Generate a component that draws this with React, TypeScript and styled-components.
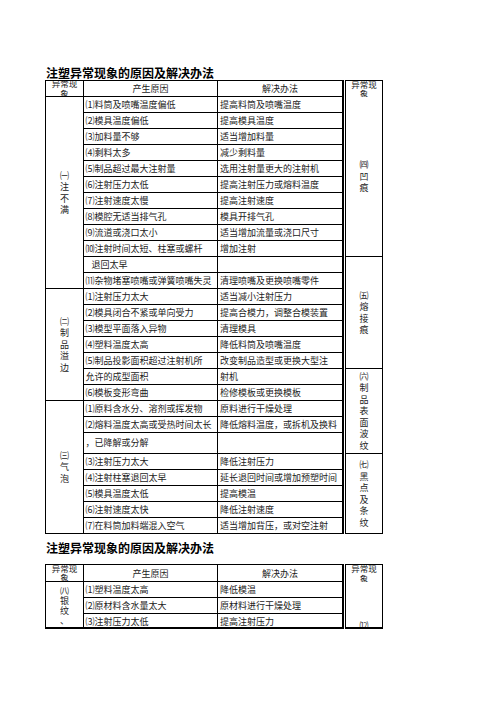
import React from 'react';
import styled, { createGlobalStyle } from 'styled-components';

const GlobalStyle = createGlobalStyle`
  html, body {
    margin: 0;
    padding: 0;
    background: #ffffff;
  }
  body {
    font-family: "Noto Sans CJK SC", "Noto Sans", sans-serif;
    color: #1a1a1a;
  }
`;

type Row = { cause: string; fix: string; indent?: boolean; tall?: boolean };
type Group = { label: string[]; rows: Row[] };
type SideGroup = { label: string[]; height: number };

const mainGroups: Group[] = [
  {
    label: ['㈠', '注', '不', '满'],
    rows: [
      { cause: '⑴料筒及喷嘴温度偏低', fix: '提高料筒及喷嘴温度' },
      { cause: '⑵模具温度偏低', fix: '提高模具温度' },
      { cause: '⑶加料量不够', fix: '适当增加料量' },
      { cause: '⑷剩料太多', fix: '减少剩料量' },
      { cause: '⑸制品超过最大注射量', fix: '选用注射量更大的注射机' },
      { cause: '⑹注射压力太低', fix: '提高注射压力或熔料温度' },
      { cause: '⑺注射速度太慢', fix: '提高注射速度' },
      { cause: '⑻模腔无适当排气孔', fix: '模具开排气孔' },
      { cause: '⑼流道或浇口太小', fix: '适当增加流量或浇口尺寸' },
      { cause: '⑽注射时间太短、柱塞或螺杆', fix: '增加注射' },
      { cause: '退回太早', fix: '', indent: true },
      { cause: '⑾杂物堵塞喷嘴或弹簧喷嘴失灵', fix: '清理喷嘴及更换喷嘴零件' },
    ],
  },
  {
    label: ['㈡', '制', '品', '溢', '边'],
    rows: [
      { cause: '⑴注射压力太大', fix: '适当减小注射压力' },
      { cause: '⑵模具闭合不紧或单向受力', fix: '提高合模力，调整合模装置' },
      { cause: '⑶模型平面落入异物', fix: '清理模具' },
      { cause: '⑷塑料温度太高', fix: '降低料筒及喷嘴温度' },
      { cause: '⑸制品投影面积超过注射机所', fix: '改变制品造型或更换大型注' },
      { cause: '允许的成型面积', fix: '射机' },
      { cause: '⑹模板变形弯曲', fix: '检修模板或更换模板' },
    ],
  },
  {
    label: ['㈢', '气', '泡'],
    rows: [
      { cause: '⑴原料含水分、溶剂或挥发物', fix: '原料进行干燥处理' },
      { cause: '⑵熔料温度太高或受热时间太长', fix: '降低熔料温度，或拆机及换料' },
      { cause: '，已降解或分解', fix: '', tall: true },
      { cause: '⑶注射压力太大', fix: '降低注射压力' },
      { cause: '⑷注射柱塞退回太早', fix: '延长退回时间或增加预塑时间' },
      { cause: '⑸模具温度太低', fix: '提高模温' },
      { cause: '⑹注射速度太快', fix: '降低注射速度' },
      { cause: '⑺在料筒加料端混入空气', fix: '适当增加背压，或对空注射' },
    ],
  },
];

const sideGroups: SideGroup[] = [
  { label: ['㈣', '凹', '痕'], height: 160 },
  { label: ['㈤', '熔', '接', '痕'], height: 112 },
  { label: ['㈥', '制', '品', '表', '面', '波', '纹'], height: 85 },
  { label: ['㈦', '黑', '点', '及', '条', '纹'], height: 80 },
];

const nextGroups: Group[] = [
  {
    label: ['㈧', '银', '纹', '、'],
    rows: [
      { cause: '⑴塑料温度太高', fix: '降低模温' },
      { cause: '⑵原材料含水量太大', fix: '原材料进行干燥处理' },
      { cause: '⑶注射压力太低', fix: '提高注射压力' },
    ],
  },
];

const Page = styled.div`
  width: 496px;
  height: 702px;
  box-sizing: border-box;
  padding: 66px 0 0 45px;
  overflow: hidden;
`;

const Section = styled.section<{ $top?: number }>`
  margin-top: ${(p) => p.$top ?? 0}px;
`;

const Title = styled.h1<{ $gap?: number }>`
  margin: 0 0 ${(p) => p.$gap ?? 0}px 1px;
  font-size: 12px;
  line-height: 14px;
  font-weight: 700;
  color: #000;
  white-space: nowrap;
`;

const Tables = styled.div`
  display: flex;
  align-items: flex-start;
  gap: 1px;
`;

const MainGrid = styled.div<{ $clip?: number }>`
  display: grid;
  grid-template-columns: 38px 134px 126px;
  box-sizing: border-box;
  border-top: 1px solid #000;
  border-left: 1px solid #000;
  ${(p) =>
    p.$clip
      ? `height: ${p.$clip}px; overflow: hidden; border-bottom: 2px solid #000;`
      : ''}
`;

const Cell = styled.div<{ $col: number; $indent?: boolean; $tall?: boolean }>`
  grid-column: ${(p) => p.$col};
  box-sizing: border-box;
  height: ${(p) => (p.$tall ? 21 : 16)}px;
  padding: 0 1px 0 ${(p) => (p.$indent ? 7.5 : p.$col === 3 ? 2 : 1.5)}px;
  border-bottom: 1px solid #000;
  border-right: ${(p) => (p.$col === 3 ? 2 : 1)}px solid #000;
  font-size: 9px;
  line-height: ${(p) => (p.$tall ? 20 : 15)}px;
  white-space: nowrap;
  overflow: hidden;
`;

const HeadCell = styled.div<{ $col: number; $h: number }>`
  grid-column: ${(p) => p.$col};
  box-sizing: border-box;
  height: ${(p) => p.$h}px;
  border-bottom: 1px solid #000;
  border-right: ${(p) => (p.$col === 3 ? 2 : 1)}px solid #000;
  display: flex;
  align-items: center;
  justify-content: center;
  text-align: center;
  font-size: 9px;
  line-height: 15px;
  overflow: hidden;
`;

const WrapHead = styled.div`
  width: 100%;
  padding: 0 2px;
  box-sizing: border-box;
  font-size: 8.5px;
  line-height: 9.5px;
  text-align: center;
  color: #222;
`;

const GroupCell = styled.div<{ $span: number; $top?: number }>`
  grid-column: 1;
  grid-row: span ${(p) => p.$span};
  box-sizing: border-box;
  border-bottom: 1px solid #000;
  border-right: 1px solid #000;
  display: flex;
  flex-direction: column;
  align-items: center;
  justify-content: ${(p) => (p.$top !== undefined ? 'flex-start' : 'center')};
  padding-top: ${(p) => p.$top ?? 0}px;
  overflow: hidden;
`;

const LabelLine = styled.span<{ $lh: number }>`
  display: block;
  font-size: 9px;
  line-height: ${(p) => p.$lh}px;
  color: #222;
`;

const SideTable = styled.div<{ $clip?: number }>`
  width: 38px;
  box-sizing: border-box;
  display: flex;
  flex-direction: column;
  border: 1px solid #000;
  border-bottom: ${(p) => (p.$clip ? 2 : 0)}px solid #000;
  ${(p) => (p.$clip ? `height: ${p.$clip}px; overflow: hidden;` : '')}
`;

const SideHead = styled.div<{ $h: number }>`
  height: ${(p) => p.$h}px;
  flex: none;
  display: flex;
  align-items: center;
  overflow: hidden;
`;

const SideCell = styled.div<{ $h: number; $top?: number }>`
  height: ${(p) => p.$h}px;
  flex: none;
  box-sizing: border-box;
  border-bottom: 1px solid #000;
  display: flex;
  flex-direction: column;
  align-items: center;
  justify-content: ${(p) => (p.$top !== undefined ? 'flex-start' : 'center')};
  padding-top: ${(p) => p.$top ?? 0}px;
`;

const Label = ({ chars, lh }: { chars: string[]; lh: number }) => (
  <>
    {chars.map((c, i) => (
      <LabelLine key={ i } $lh={ lh }>{c}</LabelLine>
    ))}
  </>
);

const MainTable = ({
  groups,
  headH,
  clip,
  labelTop,
}: {
  groups: Group[];
  headH: number;
  clip?: number;
  labelTop?: number;
}) => (
  <MainGrid $clip={ clip }>
    <HeadCell $col={ 1 } $h={ headH }>
      <WrapHead>异常现象</WrapHead>
    </HeadCell>
    <HeadCell $col={ 2 } $h={ headH }>产生原因</HeadCell>
    <HeadCell $col={ 3 } $h={ headH }>解决办法</HeadCell>
    {groups.map((g, gi) => (
      <React.Fragment key={ gi }>
        <GroupCell $span={ g.rows.length } $top={ labelTop }>
          <Label chars={ g.label } lh={ labelTop !== undefined ? 10 : 11.5 } />
        </GroupCell>
        {g.rows.map((r, ri) => (
          <React.Fragment key={ ri }>
            <Cell $col={ 2 } $indent={ r.indent } $tall={ r.tall }>{r.cause}</Cell>
            <Cell $col={ 3 } $tall={ r.tall }>{r.fix}</Cell>
          </React.Fragment>
        ))}
      </React.Fragment>
    ))}
  </MainGrid>
);

const App = () => (
  <>
    <GlobalStyle />
    <Page>
      <Section>
        <Title>注塑异常现象的原因及解决办法</Title>
        <Tables>
          <MainTable groups={ mainGroups } headH={ 16 } />
          <SideTable>
            <SideHead $h={ 16 }>
              <WrapHead>异常现象</WrapHead>
            </SideHead>
            {sideGroups.map((g, i) => (
              <SideCell key={ i } $h={ g.height }>
                <Label chars={ g.label } lh={ 11.5 } />
              </SideCell>
            ))}
          </SideTable>
        </Tables>
      </Section>
      <Section $top={ 7 }>
        <Title $gap={ 9 }>注塑异常现象的原因及解决办法</Title>
        <Tables>
          <MainTable groups={ nextGroups } headH={ 17 } clip={ 65 } labelTop={ 4 } />
          <SideTable $clip={ 65 }>
            <SideHead $h={ 17 }>
              <WrapHead>异常现象</WrapHead>
            </SideHead>
            <SideCell $h={ 60 } $top={ 38 }>
              <Label chars={ ['⑿'] } lh={ 11 } />
            </SideCell>
          </SideTable>
        </Tables>
      </Section>
    </Page>
  </>
);

export default App;
